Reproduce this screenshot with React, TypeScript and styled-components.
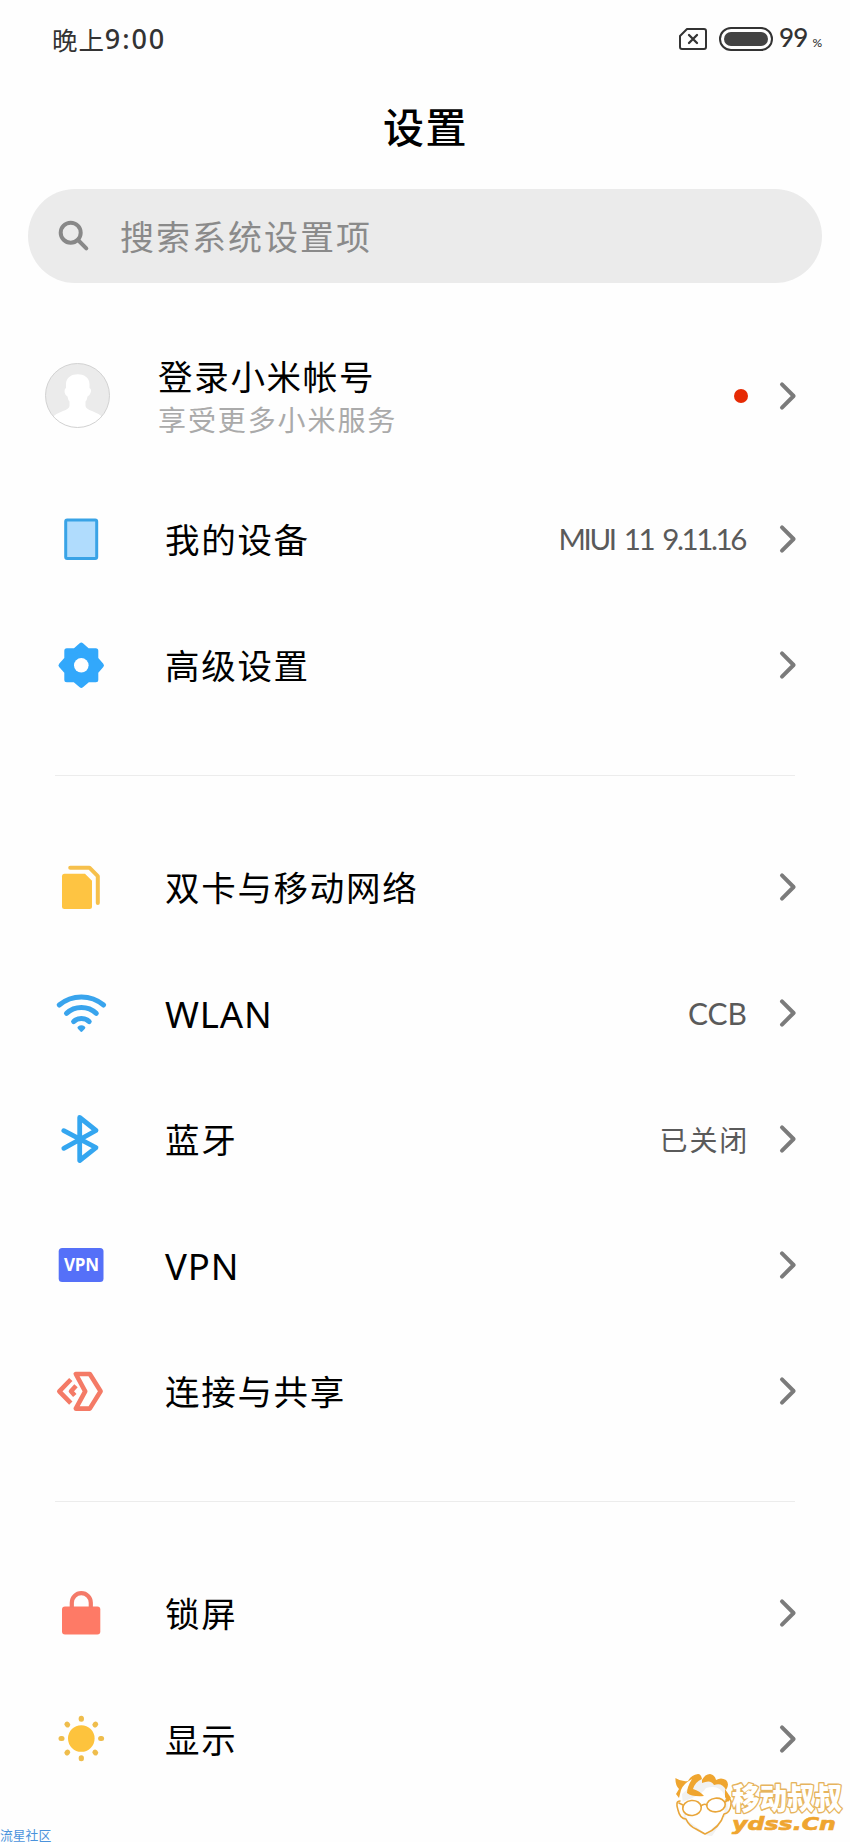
import React from "react";
import styled, { createGlobalStyle } from "styled-components";

const cjk = `"Noto Sans CJK SC", sans-serif`;

const GlobalStyle = createGlobalStyle`
  * { box-sizing: border-box; }
  body { margin: 0; background: #fefefe; }
`;

const Screen = styled.main`
  position: relative;
  width: 850px;
  height: 1842px;
  overflow: hidden;
  background: #fefefe;
  color: #000;
  font-family: "Noto Sans", ${cjk};
  white-space: nowrap;
`;

const StatusBar = styled.header`
  display: flex;
  align-items: center;
  height: 78px;
  padding: 0 28px 0 52px;
  color: #333;
`;

const Clock = styled.div`
  display: flex;
  flex: 1;
  align-items: center;
  padding-bottom: 1px;
  font: 400 25.5px/36px ${cjk};
  letter-spacing: 0.9px;
`;

const ClockDigits = styled.span`
  font: 500 27px/36px "Noto Sans", sans-serif;
  letter-spacing: 1.9px;
`;

const SimIcon = styled.svg`
  width: 30px;
  height: 24px;
  margin-right: 11px;
`;

const Battery = styled.div`
  width: 54px;
  height: 24px;
  padding: 3px;
  border: 2px solid #333;
  border-radius: 12px;
`;

const BatteryLevel = styled.div`
  height: 100%;
  border-radius: 8px;
  background: #424242;
`;

const Percent = styled.div`
  display: flex;
  align-items: baseline;
  width: 43px;
  margin-left: 6px;
  padding-top: 1px;
  font: 500 26px/34px Lato, sans-serif;
  letter-spacing: -0.8px;
`;

const PercentSign = styled.span`
  margin-left: 5px;
  font-size: 12px;
`;

const Title = styled.h1`
  display: flex;
  align-items: center;
  justify-content: center;
  height: 98px;
  margin: 0 0 13px;
  padding: 0 0 5px 1px;
  font: 500 41px/60px ${cjk};
  letter-spacing: 1.5px;
`;

const SearchBox = styled.div`
  display: flex;
  align-items: center;
  height: 94px;
  margin: 0 28px 32px 28px;
  padding-left: 30px;
  border-radius: 47px;
  background: #ebebeb;
  color: #8a8a8a;
  font: 400 34px/50px ${cjk};
  letter-spacing: 2px;
`;

const SearchIcon = styled.svg`
  width: 32px;
  height: 32px;
  margin-right: 30px;
`;

const AccountRow = styled.div`
  display: flex;
  align-items: center;
  height: 161px;
  padding: 0 53px 0 44px;
`;

const Avatar = styled.svg`
  width: 67px;
  height: 67px;
  margin-right: 47px;
`;

const AccountText = styled.div`
  flex: 1;
`;

const AccountName = styled.div`
  font: 400 34.5px/46px ${cjk};
  letter-spacing: 1.7px;
`;

const AccountHint = styled.div`
  color: #aaa;
  font: 400 28px/42px ${cjk};
  letter-spacing: 1.9px;
`;

const UnreadDot = styled.span`
  width: 14px;
  height: 14px;
  margin-right: 31px;
  border-radius: 50%;
  background: #e62a04;
`;

const Divider = styled.hr`
  height: 1px;
  margin: 47px 55px 48px;
  border: 0;
  background: #ececec;
`;

const Row = styled.div`
  display: flex;
  align-items: center;
  height: 126px;
  padding: 0 53px 0 51px;
`;

const RowIcon = styled.svg`
  width: 60px;
  height: 60px;
  margin-right: 54px;
`;

const Label = styled.span<{ $latin?: boolean }>`
  flex: 1;
  padding: ${(p) => (p.$latin ? "2px 0 0" : "0 0 2px")};
  font: 400 ${(p) => (p.$latin ? 36.5 : 34.5)}px/50px ${(p) => (p.$latin ? `"Noto Sans"` : `"Noto Sans CJK SC"`)}, sans-serif;
  letter-spacing: ${(p) => (p.$latin ? 0.9 : 1.7)}px;
`;

const Value = styled.span<{ $latin?: boolean; $tight?: boolean }>`
  margin-right: ${(p) => (p.$tight ? 34 : p.$latin ? 32 : 30)}px;
  padding-bottom: 1px;
  color: #5a5a5a;
  font: 400 ${(p) => (p.$tight ? 29.5 : p.$latin ? 30 : 28)}px/42px ${(p) => (p.$latin ? "Lato" : `"Noto Sans CJK SC"`)}, sans-serif;
  letter-spacing: ${(p) => (p.$tight ? -2.4 : p.$latin ? 0 : 1.8)}px;
  word-spacing: ${(p) => (p.$tight ? 4 : 0)}px;
`;

const ChevronSvg = styled.svg`
  width: 18px;
  height: 30px;
`;

const IconText = styled.text`
  font: 700 17px "Open Sans", sans-serif;
`;

const SiteTag = styled.div`
  position: absolute;
  left: 0;
  top: 1826px;
  color: #4b93dc;
  font: 400 12.8px/18px ${cjk};
`;

const Watermark = styled.svg`
  position: absolute;
  left: 670px;
  top: 1768px;
  width: 180px;
  height: 74px;
`;

const Brand = styled.text`
  font: 900 30px "Noto Sans CJK SC", sans-serif;
`;

const Domain = styled.text`
  font: italic 700 17px "DejaVu Sans", sans-serif;
`;

const Chevron = () => (
  <ChevronSvg viewBox="0 0 18 30">
    <path d="M3 3.4 14.6 15 3 26.6" fill="none" stroke="#7b7b7b" strokeWidth="4" strokeLinecap="round" strokeLinejoin="round" />
  </ChevronSvg>
);

const icons = {
  device: <rect x="14.7" y="11" width="31" height="38.5" rx="1.5" fill="#b0dcfd" stroke="#39a3e6" strokeWidth="3" />,
  gear: (
    <g fill="#32a8fb" stroke="#32a8fb" strokeWidth="5" strokeLinejoin="round">
      <path d="M15.8 15.8H23.8L30.3 10L36.8 15.8H44.8V23.8L50.4 30.3L44.8 36.8V44.8H36.8L30.3 50.4L23.8 44.8H15.8V36.8L10 30.3L15.8 23.8Z" />
      <circle cx="30.3" cy="30.3" r="7.3" fill="#fefefe" stroke="none" />
    </g>
  ),
  sim: (
    <>
      <path d="M13.500 16.700H34L41 23.700V49.500Q41 52 38.500 52H13.500Q11 52 11 49.500V19.200Q11 16.700 13.500 16.700Z" fill="#fec442" />
      <path d="M19.200 10.700H38.400L46.800 19.200V46" fill="none" stroke="#f6c04c" strokeWidth="4" strokeLinecap="round" strokeLinejoin="round" />
    </>
  ),
  wifi: (
    <g fill="none" stroke="#39a4ed" strokeWidth="5" strokeLinecap="round">
      <path d="M8.200 22A34.600 34.600 0 0 1 52.600 22" />
      <path d="M15.500 30.400A22 22 0 0 1 45.300 30.400" />
      <path d="M22.600 38.600A11.500 11.500 0 0 1 38.200 38.600" />
      <path d="M28 44.700Q30.400 42.700 32.800 44.700L30.400 47.300Z" fill="#39a4ed" strokeWidth="3" strokeLinejoin="round" />
    </g>
  ),
  bluetooth: (
    <path d="M12.800 21.700 45 38.700 28.700 51.500V8.500L45 21.500 12.800 39.300" fill="none" stroke="#34a6f0" strokeWidth="4.800" strokeLinecap="round" strokeLinejoin="round" />
  ),
  vpn: (
    <>
      <rect x="7.700" y="13" width="44.800" height="34" rx="3.500" fill="#5570f8" />
      <IconText x="13" y="36.200" textLength="35" fill="#fff">VPN</IconText>
    </>
  ),
  share: (
    <g fill="none" stroke="#f47a66" strokeWidth="4.600" strokeLinejoin="round">
      <path d="M24.800 13H38.800L49.600 30.300 38.800 47.600H24.800L34.200 30.300Z" />
      <path d="M19.800 18.500 8.300 30.300 19.800 42.200" />
      <path d="M25 24.800 20 30.300 23.800 34.500" />
    </g>
  ),
  lock: (
    <>
      <rect x="11" y="23.500" width="38.300" height="28" rx="3" fill="#fe7a66" />
      <path d="M20.800 25V19.700A9.500 9.500 0 0 1 39.800 19.700V25" fill="none" stroke="#f47a69" strokeWidth="4.200" />
    </>
  ),
  sun: (
    <g fill="#fdc33d">
      <circle cx="30.300" cy="29.500" r="13.300" />
      {[0, 45, 90, 135, 180, 225, 270, 315].map((a) => (
        <rect key={a} x="27.700" y="6.700" width="5.200" height="6" rx="2.500" fill="#efbd4c" transform={`rotate(${a} 30.3 29.5)`} />
      ))}
    </g>
  ),
};

type Item = { icon: keyof typeof icons; label: string; latin?: boolean; value?: string; latinValue?: boolean; tight?: boolean };

const groups: Item[][] = [
  [
    { icon: "device", label: "我的设备", value: "MIUI 11 9.11.16", latinValue: true, tight: true },
    { icon: "gear", label: "高级设置" },
  ],
  [
    { icon: "sim", label: "双卡与移动网络" },
    { icon: "wifi", label: "WLAN", latin: true, value: "CCB", latinValue: true },
    { icon: "bluetooth", label: "蓝牙", value: "已关闭" },
    { icon: "vpn", label: "VPN", latin: true },
    { icon: "share", label: "连接与共享" },
  ],
  [
    { icon: "lock", label: "锁屏" },
    { icon: "sun", label: "显示" },
  ],
];

export default function App() {
  return (
    <Screen>
      <GlobalStyle />
      <StatusBar>
        <Clock>晚上<ClockDigits>9:00</ClockDigits></Clock>
        <SimIcon viewBox="0 0 30 24" fill="none" stroke="#333" strokeWidth="2">
          <path d="M9 2H26Q28 2 28 4V20Q28 22 26 22H4Q2 22 2 20V9Z" strokeLinejoin="round" />
          <path d="M11 8 19 16M19 8 11 16" strokeWidth="2.300" strokeLinecap="round" />
        </SimIcon>
        <Battery><BatteryLevel /></Battery>
        <Percent>99<PercentSign>%</PercentSign></Percent>
      </StatusBar>
      <Title>设置</Title>
      <SearchBox>
        <SearchIcon viewBox="0 0 32 32" fill="none" stroke="#888" strokeWidth="4">
          <circle cx="12.700" cy="12.700" r="10" />
          <path d="M20 20 28.300 28.300" strokeLinecap="round" />
        </SearchIcon>
        搜索系统设置项
      </SearchBox>
      <AccountRow>
        <Avatar viewBox="0 0 67 67">
          <clipPath id="avatar"><circle cx="33.500" cy="33.500" r="32" /></clipPath>
          <circle cx="33.500" cy="33.500" r="32" fill="#ebebeb" />
          <path
            clipPath="url(#avatar)"
            fill="#fff"
            d="M22 22C22 9 45.500 9 45.500 22V26Q48 27 46.500 31Q45.500 34 43.500 34.500Q43 38 41.500 39.500V44Q42 47 48 49Q55 51.500 60 56V67H7V56Q12 51.500 19 49Q25 47 25.500 44V39.500Q24 38 23.500 34.500Q21.500 34 20.800 31Q20 27 22 26Z"
          />
          <circle cx="33.500" cy="33.500" r="32" fill="none" stroke="#d2d2d2" />
        </Avatar>
        <AccountText>
          <AccountName>登录小米帐号</AccountName>
          <AccountHint>享受更多小米服务</AccountHint>
        </AccountText>
        <UnreadDot />
        <Chevron />
      </AccountRow>
      {groups.map((items, i) => (
        <React.Fragment key={i}>
          {i > 0 && <Divider />}
          <div>
            {items.map((item) => (
              <Row key={item.label}>
                <RowIcon viewBox="0 0 60 60">{icons[item.icon]}</RowIcon>
                <Label $latin={item.latin}>{item.label}</Label>
                {item.value && <Value $latin={item.latinValue} $tight={item.tight}>{item.value}</Value>}
                <Chevron />
              </Row>
            ))}
          </div>
        </React.Fragment>
      ))}
      <SiteTag>流星社区</SiteTag>
      <Watermark viewBox="0 0 180 74">
        <g fill="none" stroke="#e9a63a" strokeWidth="1.600" strokeLinecap="round" strokeLinejoin="round">
          <path fill="#f1f1f1" stroke="none" d="M12 26Q24 16 28 12Q48 8 56 22L58 44L42 68Q30 68 14 52Z" />
          <path fill="#fff" stroke="none" d="M12 34Q32 27 36 20Q50 16 55 28L54 50L36 66L17 52Z" />
          <path d="M10 33Q5 33 8 42Q10 51 16 51Q19 58 26 61L35 66Q50 60 54 46Q60 45 61 37Q62 29 56 32" />
          <ellipse cx="22" cy="40" rx="9.300" ry="7.500" transform="rotate(-6 22 40)" />
          <ellipse cx="46" cy="37" rx="9.300" ry="6.800" transform="rotate(-6 46 37)" />
          <path d="M31 38Q34 35 37 37M13 37 9 35M55 34 59 31" />
          <path fill="#efa52f" stroke="none" d="M5.500 10Q11 14 18 13Q21 7 28 6Q31 6 32 11Q25 14 23 21Q30 23 34 28Q22 29 17 25Q17 19 22 11Q13 16 11 22L9 30L6 26L9 21Q5 17 5.500 10Z" />
          <path fill="#efa52f" stroke="none" d="M32 12Q35 6 40 6Q45 7 46 12Q51 9 56 12Q60 16 56 22Q52 14 44 17Q41 11 32 15Z" />
          <path fill="#efa52f" stroke="none" d="M55 21 61 30 58 34 55 29Z" />
        </g>
        <Brand x="62" y="41" textLength="110" lengthAdjust="spacingAndGlyphs" fill="#fff" stroke="#e6b45e" strokeWidth="2.800" paintOrder="stroke" strokeLinejoin="round">移动叔叔</Brand>
        <Domain x="62" y="62" textLength="104" lengthAdjust="spacingAndGlyphs" fill="#efa52f" stroke="#efa52f" strokeWidth=".6">ydss.Cn</Domain>
      </Watermark>
    </Screen>
  );
}
